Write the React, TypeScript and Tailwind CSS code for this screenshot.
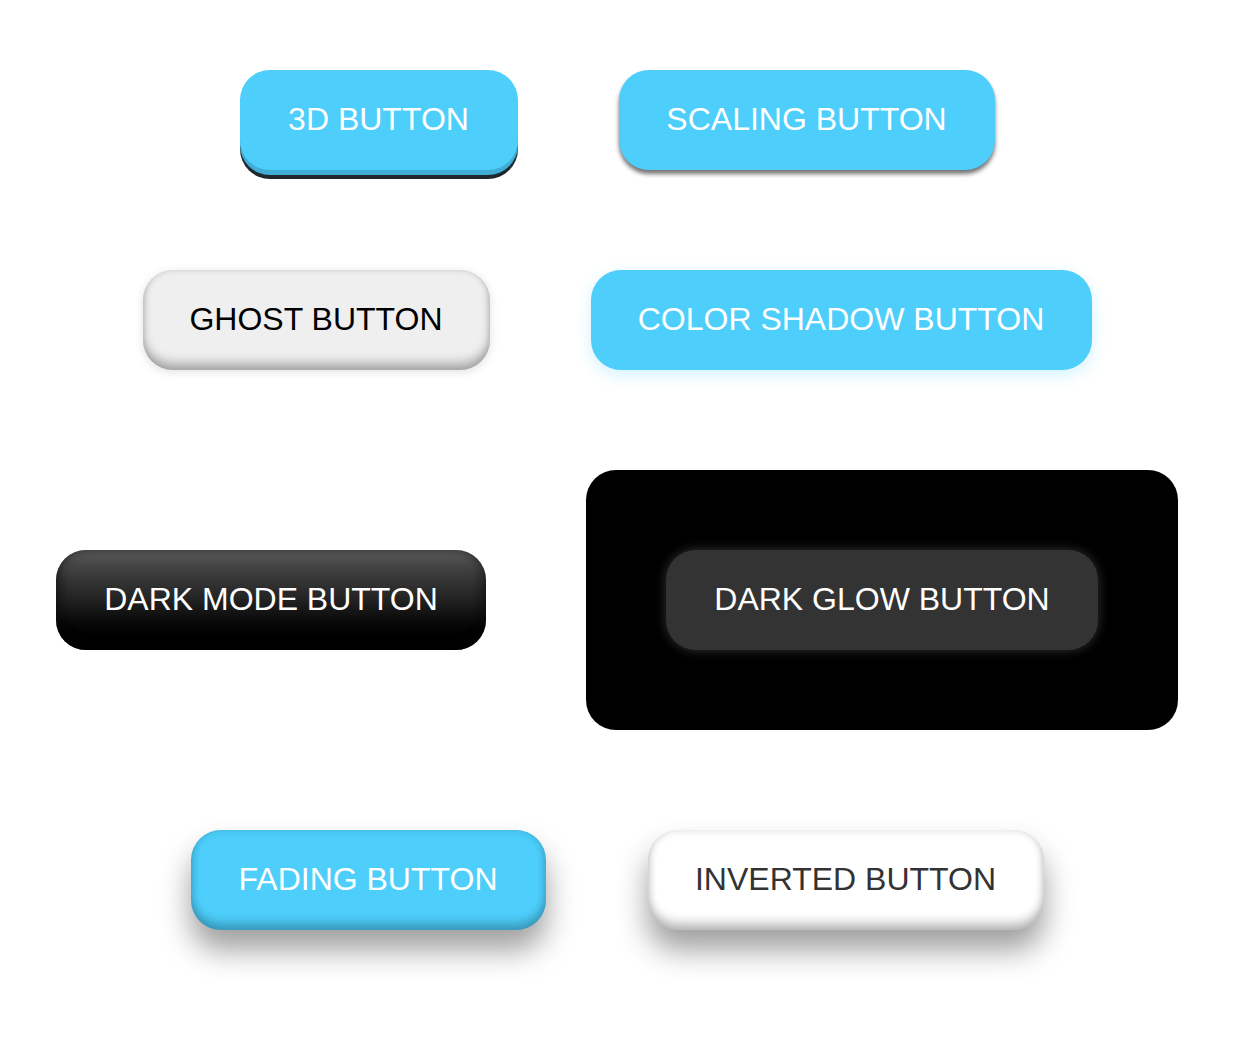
export default function App() {
  const base =
    "h-[100px] pb-[2px] flex items-center justify-center rounded-[30px] text-[32px] leading-[37px] whitespace-nowrap";
  return (
    <div
      className="w-[1242px] min-h-[1040px] bg-white pt-[70px] pr-[8px]"
      style={{ fontFamily: '"Liberation Sans", Arial, sans-serif' }}
    >
      <div className="flex flex-col gap-[100px]">
        <div className="flex justify-center items-center gap-[101px]">
          <button
            className={`${base} bg-[#4dcefb] text-white shadow-[0_5px_0_#40add6,0_9px_0_#1e282e] w-[278px]`}
          >
            3D BUTTON
          </button>
          <button
            className={`${base} bg-[#4dcefb] text-white shadow-[0_4px_4px_rgba(0,0,0,0.55)] w-[376px]`}
          >
            SCALING BUTTON
          </button>
        </div>
        <div className="flex justify-center items-center gap-[101px]">
          <button
            className={`${base} bg-[#efefef] text-black shadow-[inset_0_-8px_10px_rgba(0,0,0,0.25),inset_0_0_6px_rgba(0,0,0,0.15),0_2px_10px_rgba(0,0,0,0.12)] w-[347px]`}
          >
            GHOST BUTTON
          </button>
          <button
            className={`${base} bg-[#4dcefb] text-white shadow-[0_5px_15px_rgba(77,206,251,0.25)] w-[501px]`}
          >
            COLOR SHADOW BUTTON
          </button>
        </div>
        <div className="flex justify-center items-center gap-[100px]">
          <button
            className={`${base} bg-gradient-to-b from-[#555555] via-[#222222] to-[#000000] text-white shadow-[inset_0_8px_12px_rgba(255,255,255,0.06),inset_0_-6px_10px_rgba(0,0,0,0.6),inset_6px_0_10px_rgba(0,0,0,0.3),inset_-6px_0_10px_rgba(0,0,0,0.3)] w-[430px]`}
          >
            DARK MODE BUTTON
          </button>
          <div className="w-[592px] h-[260px] bg-black rounded-[30px] flex items-center justify-center">
            <button
              className={`${base} bg-[#333333] text-white shadow-[0_0_12px_rgba(255,255,255,0.2)] w-[432px]`}
            >
              DARK GLOW BUTTON
            </button>
          </div>
        </div>
        <div className="flex justify-center items-center gap-[102px]">
          <button
            className={`${base} bg-[#4dcefb] text-white shadow-[inset_0_-8px_10px_rgba(0,0,0,0.2),inset_0_0_8px_rgba(0,0,0,0.15),0_20px_30px_rgba(0,0,0,0.38)] w-[355px]`}
          >
            FADING BUTTON
          </button>
          <button
            className={`${base} bg-white text-[#333333] shadow-[inset_0_-8px_10px_rgba(0,0,0,0.22),inset_0_0_8px_rgba(0,0,0,0.15),0_20px_30px_rgba(0,0,0,0.38)] w-[396px]`}
          >
            INVERTED BUTTON
          </button>
        </div>
      </div>
    </div>
  );
}
